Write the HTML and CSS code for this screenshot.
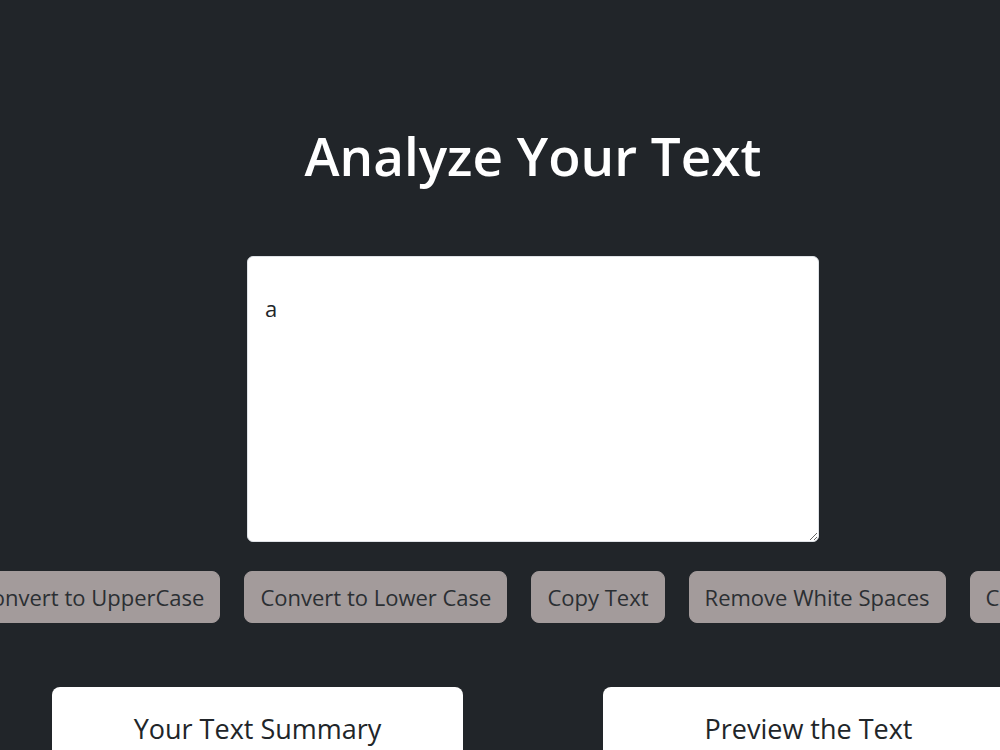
FILE: index.html
```
<!DOCTYPE html>
<html lang="en">
<head>
    <meta charset="UTF-8">
    <meta name="viewport" content="width=device-width, initial-scale=1.0">
    <title>TextUtils - Analyze Your Text</title>
    <link rel="stylesheet" href="styles.css">
</head>
<body>
    <div class="page">
        <h1 class="title">Analyze Your Text</h1>

        <div class="editor">
            <textarea id="myBox" class="text-box">a</textarea>
        </div>

        <div class="btn-row">
            <button class="btn">Convert to UpperCase</button>
            <button class="btn">Convert to Lower Case</button>
            <button class="btn">Copy Text</button>
            <button class="btn">Remove White Spaces</button>
            <button class="btn">Clear Text</button>
        </div>

        <div class="cards">
            <div class="card">
                <h3>Your Text Summary</h3>
            </div>
            <div class="card">
                <h3>Preview the Text</h3>
            </div>
        </div>
    </div>
</body>
</html>
```

FILE: styles.css
```
body {
    margin: 0;
    padding: 0;
    background-color: #212529;
    font-family: "Open Sans", Arial, sans-serif;
    overflow: hidden;
}

.page {
    width: 1066px;
    padding-top: 124px;
}

.title {
    margin: 0;
    text-align: center;
    color: #fff;
    font-size: 53px;
    font-weight: 600;
    line-height: 1.2;
}

.editor {
    display: flex;
    justify-content: center;
    margin-top: 68px;
}

.text-box {
    box-sizing: border-box;
    width: 572px;
    height: 286px;
    padding: 35px 17px;
    border: 1px solid #dee2e6;
    border-radius: 6px;
    background-color: #fff;
    color: #212529;
    font-family: inherit;
    font-size: 22px;
    line-height: 1.5;
    resize: vertical;
    outline: none;
}

.btn-row {
    display: flex;
    justify-content: center;
    gap: 24px;
    margin-top: 29px;
}

.btn {
    flex-shrink: 0;
    padding: 9px 15px;
    border: 1px solid #a39b9b;
    border-radius: 8px;
    background-color: #a39b9b;
    color: #2b2f33;
    font-family: inherit;
    font-size: 22px;
    line-height: 32px;
    white-space: nowrap;
    cursor: pointer;
}

.cards {
    display: grid;
    grid-template-columns: 411px 411px;
    justify-content: center;
    column-gap: 140px;
    margin-top: 64px;
}

.card {
    height: 200px;
    background-color: #fff;
    border-radius: 8px;
    text-align: center;
}

.card h3 {
    margin: 0;
    padding-top: 26px;
    color: #212529;
    font-size: 27px;
    font-weight: 500;
    line-height: 1.2;
}
```
